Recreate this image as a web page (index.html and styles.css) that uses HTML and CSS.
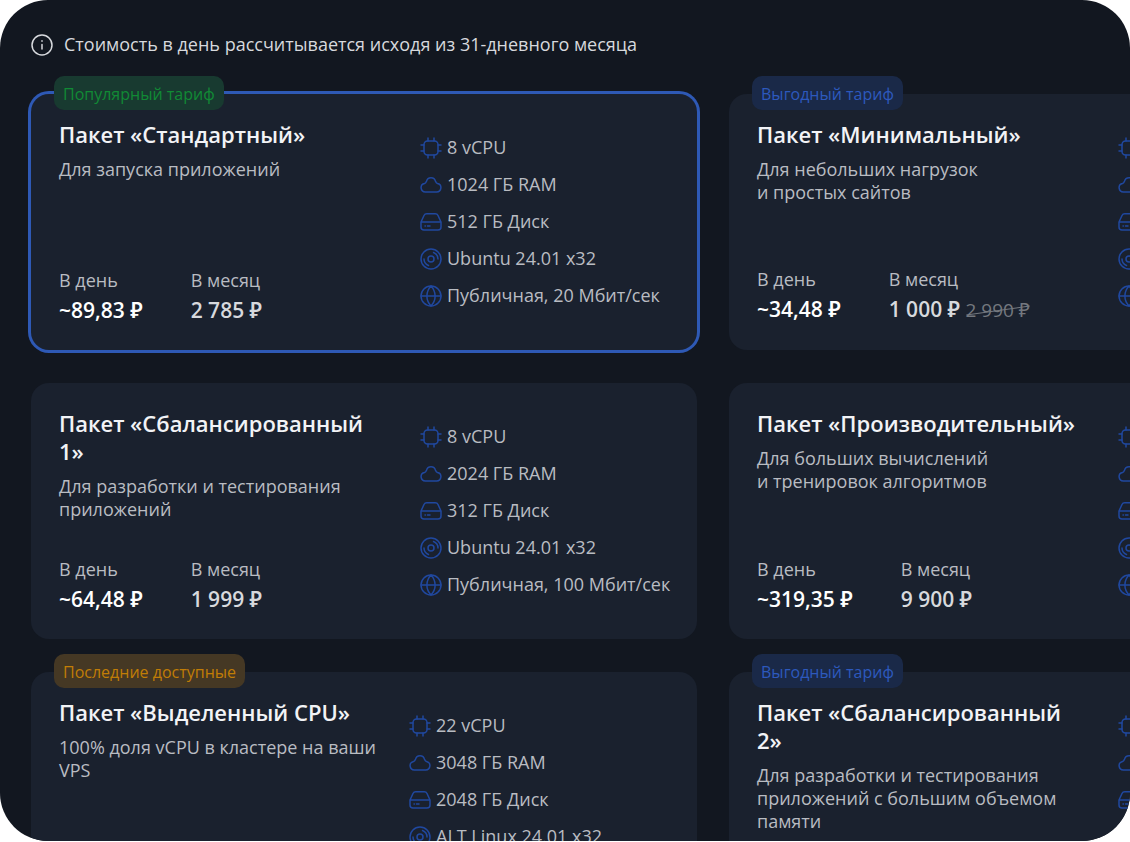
FILE: index.html
```html
<!DOCTYPE html>
<html lang="ru">
<head>
   <meta charset="UTF-8">
   <meta name="viewport" content="width=device-width, initial-scale=1.0">
   <title>Тарифы</title>
   <link rel="stylesheet" href="styles.css">
</head>
<body>
   <svg class="sprite" aria-hidden="true">
      <symbol id="info" viewBox="0 0 22 22">
         <circle cx="11" cy="11" r="10"/>
         <path d="M11 10.5v4.5M11 6.8v.4"/>
      </symbol>
      <symbol id="cpu" viewBox="0 0 22 22">
         <rect x="4" y="4" width="14" height="14" rx="3.5"/>
         <path d="M8 4V1M14 4V1M8 21v-3M14 21v-3M4 8H1M4 14H1M21 8h-3M21 14h-3"/>
      </symbol>
      <symbol id="cloud" viewBox="0 0 22 22">
         <path d="M5.500 18h11a4.300 4.300 0 0 0 1-8.500c-1-.3-1.500-.8-2-2.200a4.600 4.600 0 0 0-9 0c-.5 1.400-1 1.900-2 2.200a4.300 4.300 0 0 0 1 8.500z"/>
      </symbol>
      <symbol id="disk" viewBox="0 0 22 22">
         <path d="M1 11h20M5 15h.4M7.500 15h2.500M1 11v5a3 3 0 0 0 3 3h14a3 3 0 0 0 3-3v-5l-3-6.500a3 3 0 0 0-2.700-1.700H6.700A3 3 0 0 0 4 4.500z"/>
      </symbol>
      <symbol id="os" viewBox="0 0 22 22">
         <circle cx="11" cy="11" r="10"/>
         <circle cx="11" cy="11" r="3"/>
         <path d="M13.500 4.500a7 7 0 0 1 4.500 6.500M4 11a7 7 0 0 0 4.500 6.500"/>
      </symbol>
      <symbol id="net" viewBox="0 0 22 22">
         <circle cx="11" cy="11" r="10"/>
         <path d="M1 11h20M11 1C5.500 7 5.500 15 11 21M11 1c5.500 6 5.500 14 0 20"/>
      </symbol>
   </svg>

   <main class="screen">
      <p class="notice">
         <svg class="icon"><use href="#info"/></svg>
         Стоимость в день рассчитывается исходя из 31-дневного месяца
      </p>

      <div class="plans">
         <article class="plan active">
            <span class="badge green">Популярный тариф</span>
            <div class="info">
               <h2>Пакет «Стандартный»</h2>
               <p>Для запуска приложений</p>
               <dl class="prices">
                  <div><dt>В день</dt><dd class="day">~89,83 ₽</dd></div>
                  <div><dt>В месяц</dt><dd>2 785 ₽</dd></div>
               </dl>
            </div>
            <ul class="specs">
               <li><svg class="icon"><use href="#cpu"/></svg>8 vCPU</li>
               <li><svg class="icon"><use href="#cloud"/></svg>1024 ГБ RAM</li>
               <li><svg class="icon"><use href="#disk"/></svg>512 ГБ Диск</li>
               <li><svg class="icon"><use href="#os"/></svg>Ubuntu 24.01 x32</li>
               <li><svg class="icon"><use href="#net"/></svg>Публичная, 20 Мбит/сек</li>
            </ul>
         </article>

         <article class="plan">
            <span class="badge blue">Выгодный тариф</span>
            <div class="info">
               <h2>Пакет «Минимальный»</h2>
               <p>Для небольших нагрузок<br>и простых сайтов</p>
               <dl class="prices">
                  <div><dt>В день</dt><dd class="day">~34,48 ₽</dd></div>
                  <div><dt>В месяц</dt><dd>1 000 ₽ <s>2 990 ₽</s></dd></div>
               </dl>
            </div>
            <ul class="specs">
               <li><svg class="icon"><use href="#cpu"/></svg></li>
               <li><svg class="icon"><use href="#cloud"/></svg></li>
               <li><svg class="icon"><use href="#disk"/></svg></li>
               <li><svg class="icon"><use href="#os"/></svg></li>
               <li><svg class="icon"><use href="#net"/></svg></li>
            </ul>
         </article>

         <article class="plan">
            <div class="info">
               <h2>Пакет «Сбалансированный 1»</h2>
               <p>Для разработки и тестирования приложений</p>
               <dl class="prices">
                  <div><dt>В день</dt><dd class="day">~64,48 ₽</dd></div>
                  <div><dt>В месяц</dt><dd>1 999 ₽</dd></div>
               </dl>
            </div>
            <ul class="specs">
               <li><svg class="icon"><use href="#cpu"/></svg>8 vCPU</li>
               <li><svg class="icon"><use href="#cloud"/></svg>2024 ГБ RAM</li>
               <li><svg class="icon"><use href="#disk"/></svg>312 ГБ Диск</li>
               <li><svg class="icon"><use href="#os"/></svg>Ubuntu 24.01 x32</li>
               <li><svg class="icon"><use href="#net"/></svg>Публичная, 100 Мбит/сек</li>
            </ul>
         </article>

         <article class="plan">
            <div class="info">
               <h2>Пакет «Производительный»</h2>
               <p>Для больших вычислений<br>и тренировок алгоритмов</p>
               <dl class="prices">
                  <div><dt>В день</dt><dd class="day">~319,35 ₽</dd></div>
                  <div><dt>В месяц</dt><dd>9 900 ₽</dd></div>
               </dl>
            </div>
            <ul class="specs">
               <li><svg class="icon"><use href="#cpu"/></svg></li>
               <li><svg class="icon"><use href="#cloud"/></svg></li>
               <li><svg class="icon"><use href="#disk"/></svg></li>
               <li><svg class="icon"><use href="#os"/></svg></li>
               <li><svg class="icon"><use href="#net"/></svg></li>
            </ul>
         </article>

         <article class="plan wide-specs">
            <span class="badge orange">Последние доступные</span>
            <div class="info">
               <h2>Пакет «Выделенный CPU»</h2>
               <p>100% доля vCPU в кластере на ваши VPS</p>
            </div>
            <ul class="specs">
               <li><svg class="icon"><use href="#cpu"/></svg>22 vCPU</li>
               <li><svg class="icon"><use href="#cloud"/></svg>3048 ГБ RAM</li>
               <li><svg class="icon"><use href="#disk"/></svg>2048 ГБ Диск</li>
               <li><svg class="icon"><use href="#os"/></svg>ALT Linux 24.01 x32</li>
            </ul>
         </article>

         <article class="plan">
            <span class="badge blue">Выгодный тариф</span>
            <div class="info">
               <h2>Пакет «Сбалансированный 2»</h2>
               <p>Для разработки и тестирования приложений с большим объемом памяти</p>
            </div>
            <ul class="specs">
               <li><svg class="icon"><use href="#cpu"/></svg></li>
               <li><svg class="icon"><use href="#cloud"/></svg></li>
               <li><svg class="icon"><use href="#disk"/></svg></li>
            </ul>
         </article>
      </div>
   </main>
</body>
</html>
```
FILE: styles.css
```css
*{
   margin: 0;
   padding: 0;
   box-sizing: border-box;
}
body{
   background: #fff;
   font-family: "Open Sans", "Noto Sans", sans-serif;
   font-size: 18px;
   line-height: 23px;
   color: #b9bcc2;
}
.sprite{
   display: none;
}
.screen{
   height: calc(100vh - 1px);
   padding: 33px 31px;
   border-radius: 48px;
   background: #121720;
   overflow: hidden;
}
.icon{
   flex: none;
   width: 22px;
   height: 22px;
   fill: none;
   stroke: #20489f;
   stroke-width: 1.5;
   stroke-linecap: round;
   stroke-linejoin: round;
}
.notice{
   display: flex;
   align-items: center;
   gap: 11px;
   margin-bottom: 38px;
   color: #d7d9dd;
}
.notice .icon{
   stroke: #d7d9dd;
}
.plans{
   display: grid;
   grid-template-columns: repeat(2, minmax(666px, 1fr));
   gap: 33px 32px;
}
.plan{
   position: relative;
   display: grid;
   grid-template-columns: 1fr 249px;
   gap: 32px;
   min-height: 256px;
   padding: 26px 28px;
   border-radius: 18px;
   background: #1a212e;
}
.plan.wide-specs{
   grid-template-columns: 1fr 260px;
}
.plan.active{
   box-shadow: 0 0 0 3px #2e59b5;
}
.info{
   display: flex;
   flex-direction: column;
}
h2{
   margin-bottom: 10px;
   font-size: 22px;
   font-weight: 600;
   line-height: 28px;
   color: #f2f3f6;
}
/* prices */
.prices{
   display: flex;
   gap: 48px;
   margin-top: auto;
}
.prices dd{
   margin-top: 4px;
   font-size: 21px;
   font-weight: 600;
   line-height: 28px;
   color: #d7d9dd;
   white-space: nowrap;
}
.prices .day{
   color: #fff;
}
.prices s{
   position: relative;
   font-size: 19px;
   font-weight: 400;
   text-decoration: none;
   color: #74787f;
}
.prices s::after{
   content: '';
   position: absolute;
   left: 0;
   right: 0;
   top: 50%;
   height: 1px;
   background: #74787f;
   transform: rotate(-8deg);
}
/* specs */
.specs{
   display: flex;
   flex-direction: column;
   gap: 14px;
   padding-top: 16px;
   list-style: none;
   white-space: nowrap;
}
.specs li{
   display: flex;
   align-items: center;
   gap: 5px;
   height: 23px;
}
/* badges */
.badge{
   position: absolute;
   top: -18px;
   left: 23px;
   padding: 7px 9px 5px;
   border-radius: 10px;
   font-size: 16px;
   line-height: 22px;
}
.badge.green{
   background: #183a30;
   color: #118a35;
}
.badge.blue{
   background: #1a2948;
   color: #2d59bd;
}
.badge.orange{
   background: #453824;
   color: #c17d06;
}
```
